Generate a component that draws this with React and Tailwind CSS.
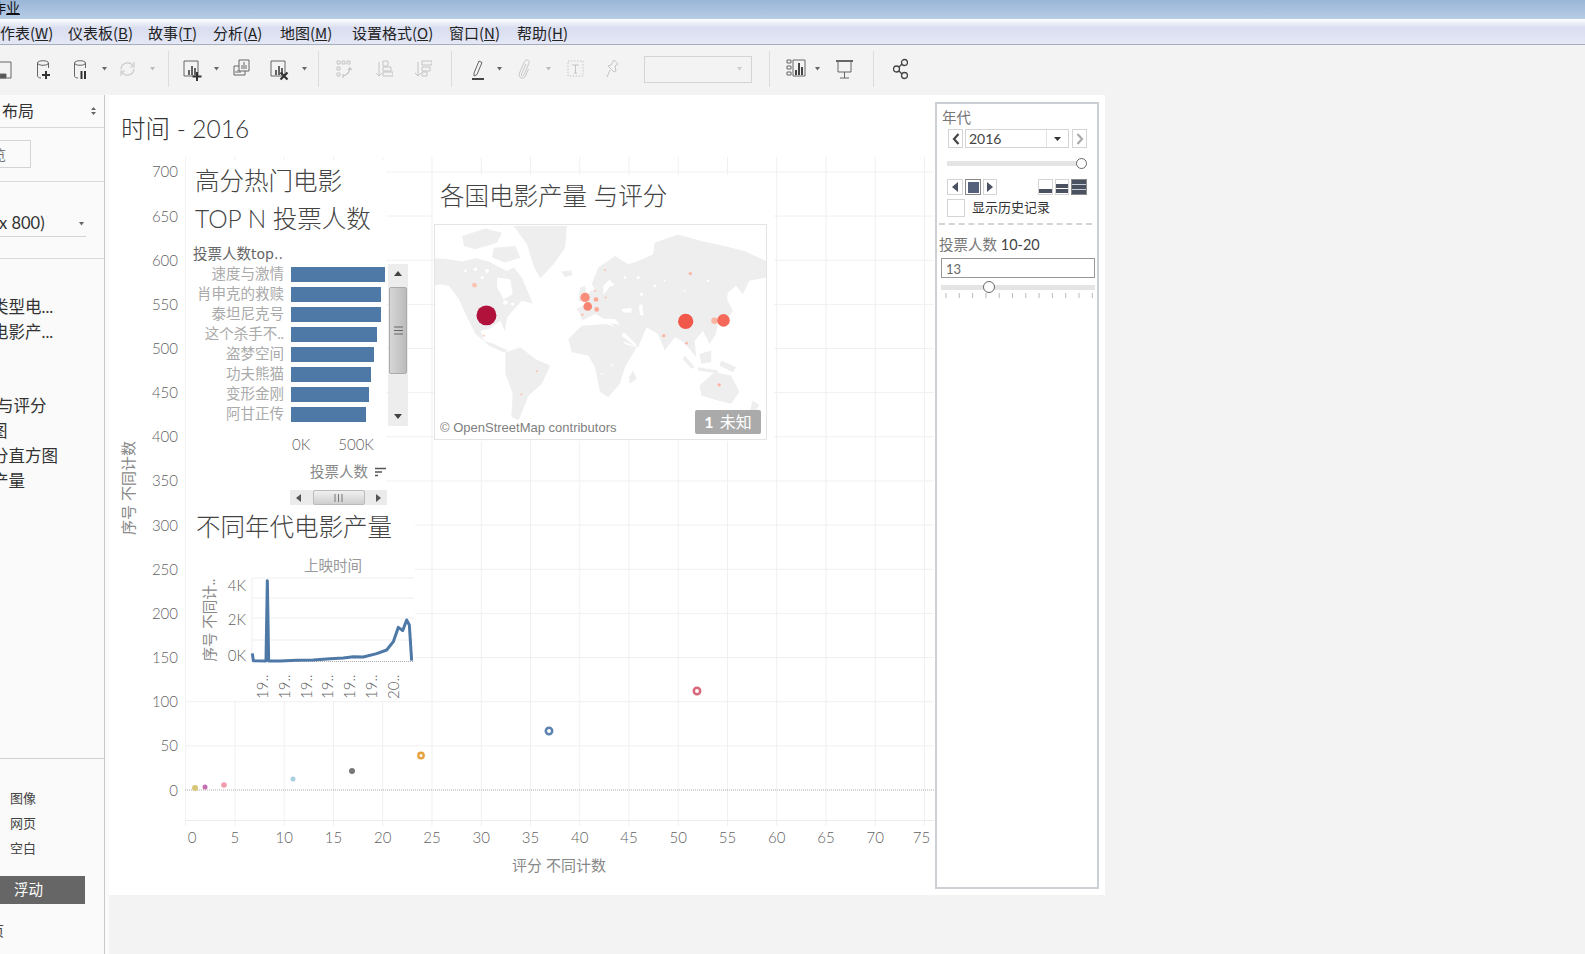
import React from "react";

const Dd = ({ ml, c = "#666" }) => (
  <svg width="5" height="4" viewBox="0 0 5 4" className={`shrink-0 ${ml}`}>
    <path d="M0 0h5L2.500 3.500z" fill={c} />
  </svg>
);
const Sep = ({ ml }) => <div className={`shrink-0 w-px h-[36px] bg-[#dcdcdc] ${ml}`} />;
const Ico = ({ w, h = 24, ml, children, stroke = "#666" }) => (
  <svg width={w} height={h} viewBox={`0 0 ${w} ${h}`} fill="none" stroke={stroke} strokeWidth="1" className={`shrink-0 ${ml}`}>
    {children}
  </svg>
);
const Db = () => (
  <>
    <path d="M1.500 6v13c0 1 1.500 2 3.500 2M12.500 6v5M1.500 6c0-3 11-3 11 0s-11 3-11 0z" />
  </>
);
const Chart = () => (
  <path d="M6 18v-5M9 18V9M12 18v-7" strokeWidth="1.800" stroke="#555" />
);

const Toolbar = () => (
  <div className="flex items-center h-[50px] pb-[2px] bg-[#f3f3f3] overflow-hidden">
    <Ico w={18} ml="-ml-[6px]">
      <path d="M1 5h16v16H1z" />
      <path d="M6 21v-4h6v4z" fill="#555" />
    </Ico>
    <Ico w={15} ml="ml-[24px]">
      <Db />
      <path d="M10 14v8M6 18h8" stroke="#333" strokeWidth="2" />
    </Ico>
    <Ico w={14} ml="ml-[22px]">
      <Db />
      <path d="M8.500 14v8M12 14v8" stroke="#333" strokeWidth="2" />
    </Ico>
    <Dd ml="ml-[15px]" />
    <Ico w={17} ml="ml-[12px]" stroke="#ccc">
      <path d="M2 12a6.500 6.500 0 0 1 12-3M15 12a6.500 6.500 0 0 1-12 3" strokeWidth="1.400" />
      <path d="M15 5v5h-4M2 19v-5h4" strokeWidth="1.200" />
    </Ico>
    <Dd ml="ml-[14px]" c="#bbb" />
    <Sep ml="ml-[13px]" />
    <Ico w={19} ml="ml-[14px]">
      <path d="M1 4h14v15H1z" />
      <Chart />
      <path d="M14 15v9M9.500 19.500h9" stroke="#333" strokeWidth="2" />
    </Ico>
    <Dd ml="ml-[12px]" />
    <Ico w={17} ml="ml-[14px]">
      <path d="M6 3h10v11H6z" />
      <path d="M1 9h5M1 9v9h11v-4" />
      <path d="M9 12V8M11 12V5M13 12V8M3 16v-2M5 16v-3M7 16v-2" />
    </Ico>
    <Ico w={19} ml="ml-[20px]">
      <path d="M1 4h14v15H1z" />
      <Chart />
      <path d="M10.500 15.500l7 7M17.500 15.500l-7 7" stroke="#333" strokeWidth="2.200" />
    </Ico>
    <Dd ml="ml-[13px]" />
    <Sep ml="ml-[11px]" />
    <Ico w={16} ml="ml-[17px]" stroke="#c4c4c4">
      <path d="M1 4h3v3H1zM6 4h3v3H6zM11 4h3v3h-3zM1 10h3v3H1zM1 16h3v3H1z" />
      <path d="M14 10c0 5-3 8-7 9M7 17v4M14 11l2 2M14 11l-2 2" strokeWidth="1.200" />
    </Ico>
    <Ico w={18} ml="ml-[23px]" stroke="#c4c4c4">
      <path d="M4 5v14M1 16l3 3 3-3" />
      <path d="M8 4h5v5H8zM8 10h8v4H8zM8 15h10v4H8z" />
    </Ico>
    <Ico w={18} ml="ml-[21px]" stroke="#c4c4c4">
      <path d="M4 5v14M1 16l3 3 3-3" />
      <path d="M8 4h10v4H8zM8 10h8v4H8zM8 15h5v4H8z" />
    </Ico>
    <Sep ml="ml-[19px]" />
    <Ico w={12} ml="ml-[20px]">
      <path d="M2 16L7 4l3 1.500-5 12-3 1.500z" />
      <path d="M0 22h12" stroke="#444" strokeWidth="2" />
    </Ico>
    <Dd ml="ml-[13px]" />
    <Ico w={12} ml="ml-[16px]" stroke="#c8c8c8">
      <path d="M8 7L3.500 17c-1 2 1.500 3 2.500 1l5-12c1-3-3-4.500-4.500-1.500L1.500 16c-2 5 4 7 6 3l3-7" strokeWidth="1" />
    </Ico>
    <Dd ml="ml-[16px]" c="#bbb" />
    <Ico w={17} ml="ml-[16px]" stroke="#c4c4c4">
      <path d="M1 4h15v15H1z" strokeDasharray="1.500 1.500" />
      <path d="M5 8h7M8.500 8v8M7 16h3" />
    </Ico>
    <Ico w={13} ml="ml-[22px]" stroke="#c4c4c4">
      <path d="M8 3l4 4-3 2 1 5-2 1-6-6 3-1zM4 13l-3 7" />
    </Ico>
    <div className="shrink-0 ml-[25px] w-[108px] h-[27px] border border-[#d4d4d4] flex items-center justify-end pr-[9px]">
      <Dd ml="" c="#ccc" />
    </div>
    <Sep ml="ml-[17px]" />
    <Ico w={20} ml="ml-[16px]">
      <path d="M1 3h4v3H1zM1 9h4v3H1zM1 15h4v3H1zM7 3h12v16H7z" />
      <path d="M10 18v-5M13 18V6M16 18v-8" stroke="#444" strokeWidth="2" />
    </Ico>
    <Dd ml="ml-[9px]" />
    <Ico w={17} ml="ml-[16px]">
      <path d="M0 4h17" strokeWidth="2" />
      <path d="M2 4v11h13V4M8.500 15v6M4 21h9" />
    </Ico>
    <Sep ml="ml-[20px]" />
    <Ico w={15} ml="ml-[19px]" stroke="#444">
      <circle cx="11.500" cy="5.500" r="3" strokeWidth="1.300" />
      <circle cx="3.500" cy="12" r="3" strokeWidth="1.300" />
      <circle cx="11.500" cy="18.500" r="3" strokeWidth="1.300" />
      <path d="M6 10l3-3M6 14l3 3" strokeWidth="1.300" />
    </Ico>
  </div>
);

const Menu = ({ t, k, w }) => (
  <span className={`shrink-0 ${w}`}>
    {t}(<span className="underline">{k}</span>)
  </span>
);

const Sidebar = () => (
  <div className="w-[105px] shrink-0 h-[859px] bg-[#fafafa] border-r border-[#c9c9c9] flex flex-col overflow-hidden text-[#333]">
    <div className="h-[33px] border-b border-[#d8d8d8] flex items-center justify-between pl-[2px] pr-[8px] text-[16px]">
      <span>布局</span>
      <svg width="5" height="8" viewBox="0 0 5 8"><path d="M0 3h5L2.500 0zM0 5h5L2.500 8z" fill="#666" /></svg>
    </div>
    <div className="h-[54px] border-b border-[#d8d8d8] pt-[12px]">
      <div className="w-[31px] h-[28px] border border-l-0 border-[#d4d4d4] bg-[#fafafa] overflow-hidden flex items-center text-[14px] text-[#777]">
        <span className="-ml-[8px]">览</span>
      </div>
    </div>
    <div className="h-[77px] border-b border-[#d8d8d8] pt-[31px]">
      <div className="w-[86px] h-[24px] border-b border-[#d4d4d4] flex items-center justify-between pr-[2px] pb-[2px] text-[16.500px] whitespace-nowrap">
        <span className="-ml-[1px]">x 800)</span>
        <Dd ml="" />
      </div>
    </div>
    <div className="h-[500px] border-b border-[#d0d0d0] pt-[36px] text-[16.500px] whitespace-nowrap">
      <div className="h-[25px] leading-[25px] -ml-[8px]">类型电...</div>
      <div className="h-[25px] leading-[25px] -ml-[8px]">电影产...</div>
      <div className="h-[25px] leading-[25px] -ml-[3px] mt-[49px]">与评分</div>
      <div className="h-[25px] leading-[25px] -ml-[9px]">图</div>
      <div className="h-[25px] leading-[25px] -ml-[8px]">分直方图</div>
      <div className="h-[25px] leading-[25px] -ml-[8px]">产量</div>
    </div>
    <div className="flex-1 pt-[27px] text-[13px] text-[#444]">
      <div className="h-[25px] leading-[25px] pl-[10px]">图像</div>
      <div className="h-[25px] leading-[25px] pl-[10px]">网页</div>
      <div className="h-[25px] leading-[25px] pl-[10px]">空白</div>
      <div className="mt-[15px] w-[85px] h-[28px] bg-[#666] text-white text-[14.500px] pl-[14px] leading-[28px]">浮动</div>
      <div className="mt-[14px] h-[25px] leading-[25px] -ml-[10px] text-[14px]">页</div>
    </div>
  </div>
);

const yv = [700, 650, 600, 550, 500, 450, 400, 350, 300, 250, 200, 150, 100, 50, 0];
const xv = Array.from({ length: 16 }, (_, i) => i * 5);
const Y = (v) => 790 - (v / 50) * 44.15;
const X = (v) => 185.7 + v * 9.85;

const Scatter = () => (
  <svg width="826" height="730" viewBox="109 155 826 730" className="block shrink-0">
    {yv.filter((v) => v > 0).map((v) => (
      <line key={v} x1="185" x2="934" y1={Y(v)} y2={Y(v)} stroke="#f0f0f0" />
    ))}
    {xv.map((v) => (
      <line key={v} x1={X(v)} x2={X(v)} y1="157" y2="826" stroke="#f0f0f0" />
    ))}
    <line x1="185" x2="934" y1="820.500" y2="820.500" stroke="#ececec" />
    <line x1="185" x2="934" y1="790" y2="790" stroke="#aaa" strokeDasharray="1 1" />
    {yv.map((v) => (
      <text key={v} x="178" y={Y(v) + 5.500} textAnchor="end" fontSize="15" fontWeight="300" fill="#5f5f5f">{v}</text>
    ))}
    {xv.map((v) => (
      <text key={v} x={v === 0 ? 192 : X(v) - (v === 75 ? 3 : 0)} y="843" textAnchor="middle" fontSize="15" fontWeight="300" fill="#5f5f5f">{v}</text>
    ))}
    <text x="559" y="871" textAnchor="middle" fontSize="15" fill="#888">评分 不同计数</text>
    <text transform="translate(134 488) rotate(-90)" textAnchor="middle" fontSize="15" fill="#888">序号 不同计数</text>
    <circle cx="195" cy="788" r="3" fill="#d9c576" />
    <circle cx="205" cy="787" r="2.500" fill="#c56fb0" />
    <circle cx="224" cy="785" r="2.800" fill="#ef9bb0" />
    <circle cx="293" cy="779" r="2.500" fill="#aacfe0" />
    <circle cx="352" cy="771" r="3" fill="#777" />
    <circle cx="421" cy="755.500" r="2.700" fill="#fff" stroke="#e8a13f" strokeWidth="2.400" />
    <circle cx="549" cy="731" r="3.200" fill="#fff" stroke="#5c83b0" strokeWidth="2.500" />
    <circle cx="697" cy="691" r="3.200" fill="#fff" stroke="#d8677c" strokeWidth="2.500" />
  </svg>
);

const bars = [
  ["速度与激情", 94],
  ["肖申克的救赎", 90],
  ["泰坦尼克号", 90],
  ["这个杀手不..", 86],
  ["盗梦空间", 83],
  ["功夫熊猫", 80],
  ["变形金刚", 78],
  ["阿甘正传", 75],
];

const TopPanel = () => (
  <div className="absolute left-[77px] top-[65px] w-[200px] h-[346px] bg-white pt-[2px]">
    <div className="h-[38px] leading-[38px] text-[24.500px] font-light text-[#444] pl-[9px]">高分热门电影</div>
    <div className="h-[38px] leading-[38px] text-[24.500px] font-light text-[#444] pl-[9px] whitespace-nowrap">TOP N 投票人数</div>
    <div className="mt-[7px] h-[18px] leading-[18px] text-[14.500px] text-[#666] pl-[7px] whitespace-nowrap">
      投票人数<span className="font-['DejaVu_Sans',sans-serif] text-[14px]">top..</span>
    </div>
    <div className="mt-[1px]">
      {bars.map(([n, w]) => (
        <div key={n} className="flex items-center h-[20px]">
          <div className="w-[98px] text-right text-[14.500px] text-[#aaa] whitespace-nowrap">{n}</div>
          <div className="ml-[7px] h-[15px] bg-[#4e79a7]" style={{ width: w }} />
        </div>
      ))}
    </div>
    <div className="mt-[10px] h-[20px] leading-[20px] pl-[106px] flex gap-[28px] text-[15px] font-light text-[#5f5f5f]">
      <span>0K</span>
      <span>500K</span>
    </div>
    <div className="mt-[9px] h-[18px] pl-[124px] flex items-center gap-[7px] text-[14.500px] text-[#888]">
      <span className="whitespace-nowrap">投票人数</span>
      <svg width="11" height="10" viewBox="0 0 11 10"><path d="M0 1.500h11M0 5h7M0 8.500h3" stroke="#555" strokeWidth="1.600" /></svg>
    </div>
    <div className="mt-[9px] ml-[104px] w-[97px] h-[15px] bg-[#ebebeb] flex items-center justify-between px-[6px]">
      <svg width="5" height="8" viewBox="0 0 5 8"><path d="M5 0v8L0 4z" fill="#555" /></svg>
      <div className="w-[52px] h-[15px] bg-gradient-to-b from-[#f0f0f0] to-[#cfcfcf] border border-[#bbb] rounded-[2px] flex items-center justify-center">
        <svg width="9" height="8" viewBox="0 0 9 8"><path d="M1 0v8M4.500 0v8M8 0v8" stroke="#777" /></svg>
      </div>
      <svg width="5" height="8" viewBox="0 0 5 8"><path d="M0 0v8l5-4z" fill="#555" /></svg>
    </div>
    <div className="absolute left-[202px] top-[104px] w-[20px] h-[162px] bg-[#ededed] flex flex-col items-center justify-between py-[7px]">
      <svg width="8" height="5" viewBox="0 0 8 5"><path d="M0 5h8L4 0z" fill="#444" /></svg>
      <div className="absolute left-[1px] top-[23px] w-[18px] h-[87px] rounded-[2px] bg-gradient-to-r from-[#d6d6d6] to-[#bcbcbc] border border-[#aaa] flex items-center justify-center">
        <svg width="9" height="9" viewBox="0 0 9 9"><path d="M0 1h9M0 4.500h9M0 8h9" stroke="#666" /></svg>
      </div>
      <svg width="8" height="5" viewBox="0 0 8 5"><path d="M0 0h8L4 5z" fill="#444" /></svg>
    </div>
  </div>
);

const line = "217,430 220,452 258,453 262,212 266,453 300,453 350,451 400,450 450,446 490,444 520,440 550,441 590,431 620,420 640,395 655,352 668,362 680,330 688,345 695,452";

const YearPanel = () => (
  <div className="absolute left-[77px] top-[411px] w-[229px] h-[195px] bg-white pt-[2px]">
    <div className="h-[38px] leading-[38px] text-[24.500px] font-light text-[#444] pl-[10px] whitespace-nowrap">不同年代电影产量</div>
    <svg width="229" height="155" viewBox="186 546 229 155" className="block">
      <text x="333" y="571" textAnchor="middle" fontSize="14.500" fill="#999">上映时间</text>
      <text transform="translate(215 620) rotate(-90)" textAnchor="middle" fontSize="14.500" fill="#888">序号 不同计..</text>
      {[578, 598, 618, 640].map((y) => (
        <line key={y} x1="252" x2="414" y1={y} y2={y} stroke="#efefef" />
      ))}
      <line x1="252" x2="252" y1="578" y2="662" stroke="#efefef" />
      <line x1="252" x2="414" y1="661.500" y2="661.500" stroke="#aaa" strokeDasharray="1 1" />
      <text x="246" y="591" textAnchor="end" fontSize="15" fontWeight="300" fill="#5f5f5f">4K</text>
      <text x="246" y="625" textAnchor="end" fontSize="15" fontWeight="300" fill="#5f5f5f">2K</text>
      <text x="246" y="661" textAnchor="end" fontSize="15" fontWeight="300" fill="#5f5f5f">0K</text>
      <g transform="translate(180 510) scale(.33333)">
        <polyline points={line} fill="none" stroke="#4e79a7" strokeWidth="9" strokeLinejoin="round" />
      </g>
      {[268, 290, 312, 333, 355, 377, 399].map((x, i) => (
        <text key={x} transform={`translate(${x} 699) rotate(-90)`} fontSize="15" fontWeight="300" fill="#5f5f5f">{i === 6 ? "20.." : "19.."}</text>
      ))}
    </svg>
  </div>
);

const bubbles = [
  [183, 434, 30, "#b0123c"], [783, 452, 23, "#f1584a"], [870, 450, 10, "#fab5a2"], [897, 449, 19, "#f4695a"],
  [480, 380, 14, "#f98e7a"], [488, 407, 13, "#f68470"], [513, 386, 7, "#fba795"], [515, 416, 7, "#fba795"],
  [472, 432, 4, "#fbc3b3"], [147, 343, 7, "#fbc3b3"], [797, 308, 5, "#fbb5a5"], [540, 297, 3, "#fbc3b3"],
  [717, 495, 5, "#fbb5a5"], [786, 518, 4, "#fbb5a5"], [884, 643, 5, "#fbb5a5"], [335, 602, 3, "#fbc3b3"],
  [288, 672, 3, "#fbc3b3"], [175, 495, 3, "#fbc3b3"], [510, 360, 3, "#fbc3b3"], [542, 380, 3, "#fbc3b3"],
];

const lakes = [
  [185, 300, 6], [150, 295, 5], [240, 395, 7], [262, 400, 5], [120, 300, 4], [170, 320, 5], [650, 370, 5], [690, 345, 4],
  [640, 320, 5], [720, 330, 3], [780, 360, 3], [850, 330, 4], [560, 340, 6], [600, 320, 4], [560, 585, 3], [530, 610, 3],
];

const MapPanel = () => (
  <div className="absolute left-[325px] top-[80px] w-[340px] h-[266px] bg-white">
    <div className="h-[42px] leading-[42px] text-[24.500px] font-light text-[#444] pl-[6px] whitespace-nowrap">各国电影产量 与评分</div>
    <div className="relative mt-[7px] w-[333px] h-[216px] border border-[#e4e4e4] bg-white overflow-hidden">
      <svg width="331" height="214" viewBox="28 162 997 644" className="block">
        <g fill="#eeeeee">
          <path d="M28 262L70 265L110 272L150 262L190 272L215 285L245 300L265 290L290 320L322 398L290 390L262 420L245 440L238 482L225 450L190 475L165 480L175 510L205 520L248 540L235 546L190 525L150 490L125 440L100 385L70 345L45 340L28 345Z" />
          <path d="M110 195L180 172L230 185L215 215L150 235L115 225Z" />
          <path d="M205 230L270 225L285 260L240 275L200 260Z" />
          <path d="M265 165L425 165L420 230L385 280L345 322L325 285L305 220Z" />
          <path d="M408 302L438 298L442 312L420 318Z" />
          <path d="M465 350L480 345L488 385L460 392Z" />
          <path d="M500 340L520 290L570 255L610 280L640 270L685 250L690 215L760 190L830 210L900 225L960 240L1025 270L1025 320L975 330L955 370L935 345L910 365L905 410L880 450L875 490L855 520L835 480L810 510L815 560L790 530L770 510L750 500L720 540L700 490L665 470L640 530L590 510L565 465L545 450L530 440L510 430L470 450L465 430L455 415L490 395L480 370L510 355Z" />
          <path d="M430 505L470 465L545 460L570 470L600 520L635 530L600 590L585 640L550 680L525 665L510 590L490 555L440 545Z" />
          <path d="M240 545L285 530L330 565L375 585L350 640L310 675L280 750L258 740L262 670L240 610Z" />
          <path d="M825 645L870 605L920 615L945 665L920 700L880 690L830 675Z" />
          <path d="M905 380L925 420L895 465L885 455Z" />
          <path d="M625 600L635 625L615 640L612 620Z" />
          <path d="M780 555L810 590L800 595L775 565ZM820 590L880 600L880 608L820 600ZM825 550L860 540L860 575L830 580ZM890 570L935 590L925 605L885 585Z" />
          <path d="M985 690L1005 705L990 725L975 730Z" />
        </g>
        <g fill="#fff">
          <path d="M215 320L255 325L262 370L235 385L215 350Z" />
          <path d="M535 345L555 325L560 340L545 360L535 372Z" />
          <path d="M505 443L570 445L585 462L555 458L520 452Z" />
          <path d="M590 415L620 412L620 425L595 425Z" />
          <path d="M642 405L652 400L656 435L645 432Z" />
          <path d="M597 485L635 522L630 526L590 495Z" />
          <path d="M665 482L688 482L680 495Z" />
          {lakes.map(([x, y, r], i) => (
            <circle key={i} cx={x} cy={y} r={r} />
          ))}
        </g>
        {bubbles.map(([x, y, r, c], i) => (
          <circle key={i} cx={x} cy={y} r={r} fill={c} />
        ))}
      </svg>
      <div className="absolute left-[5px] bottom-[2px] text-[13px] leading-[18px] text-[#808080] font-['Liberation_Sans',sans-serif] whitespace-nowrap">© OpenStreetMap contributors</div>
      <div className="absolute right-[5px] bottom-[5px] w-[66px] h-[24px] bg-[#aaa] rounded-[2px] flex items-center justify-center gap-[6px] text-white text-[16px] font-bold whitespace-nowrap">
        <span>1</span><span className="font-normal">未知</span>
      </div>
    </div>
  </div>
);

const Btn = ({ className = "", children }) => (
  <div className={`border border-[#d4d4d4] bg-white flex items-center justify-center shrink-0 ${className}`}>{children}</div>
);

const Controls = () => (
  <div className="mt-[7px] w-[164px] h-[787px] border-2 border-[#ccd0d4] bg-white shrink-0">
    <div className="mt-[4px] h-[20px] leading-[20px] pl-[5px] text-[14.500px] text-[#777]">年代</div>
    <div className="mt-[1px] pl-[11px] flex h-[19px]">
      <Btn className="w-[15px] h-[19px]">
        <svg width="8" height="12" viewBox="0 0 8 12"><path d="M6.500 1L2 6l4.500 5" fill="none" stroke="#444" strokeWidth="2.200" /></svg>
      </Btn>
      <Btn className="ml-[2px] w-[104px] h-[19px] !justify-start pl-[3px] text-[14px] text-[#444]">
        <span>2016</span>
        <div className="ml-auto w-[22px] h-full border-l border-[#e4e4e4] flex items-center justify-center">
          <svg width="7" height="4" viewBox="0 0 7 4"><path d="M0 0h7L3.500 4z" fill="#333" /></svg>
        </div>
      </Btn>
      <Btn className="ml-[3px] w-[15px] h-[19px]">
        <svg width="8" height="12" viewBox="0 0 8 12"><path d="M1.500 1L6 6l-4.500 5" fill="none" stroke="#aaa" strokeWidth="2.200" /></svg>
      </Btn>
    </div>
    <div className="relative mt-[10px] ml-[10px] w-[134px] h-[11px] flex items-center">
      <div className="w-full h-[5px] bg-[#e4e4e4]" />
      <div className="absolute -right-[6px] top-0 w-[11px] h-[11px] rounded-full bg-white border border-[#666]" />
    </div>
    <div className="mt-[10px] ml-[10px] w-[140px] h-[16px] flex">
      <Btn className="w-[16px] h-[16px]"><svg width="6" height="10" viewBox="0 0 6 10"><path d="M6 0v10L0 5z" fill="#4a5160" /></svg></Btn>
      <Btn className="ml-[2px] w-[16px] h-[16px] !border-[#888]"><div className="w-[11px] h-[11px] bg-[#55607a]" /></Btn>
      <Btn className="ml-[2px] w-[14px] h-[16px]"><svg width="6" height="10" viewBox="0 0 6 10"><path d="M0 0v10l6-5z" fill="#4a5160" /></svg></Btn>
      <Btn className="ml-auto w-[15px] h-[16px] !items-end"><div className="w-[13px] h-[4px] mb-px bg-[#4a5160]" /></Btn>
      <Btn className="ml-[2px] w-[14px] h-[16px] !items-end"><div className="w-[12px] h-[9px] mb-px bg-[linear-gradient(#4a5160_40%,#fff_40%,#fff_55%,#4a5160_55%)]" /></Btn>
      <Btn className="ml-[2px] w-[16px] h-[16px] !border-[#888]"><div className="w-[14px] h-[14px] bg-[linear-gradient(#4a5160_28%,#c8ccd4_28%,#c8ccd4_36%,#4a5160_36%,#4a5160_64%,#c8ccd4_64%,#c8ccd4_72%,#4a5160_72%)]" /></Btn>
    </div>
    <div className="mt-[4px] ml-[10px] flex items-center h-[18px]">
      <div className="w-[18px] h-[18px] border border-[#d4d4d4] bg-white" />
      <span className="ml-[7px] text-[13px] text-[#333] whitespace-nowrap">显示历史记录</span>
    </div>
    <div className="mt-[6px] ml-[2px] w-[153px] border-t-2 border-dashed border-[#d4d4d4]" />
    <div className="mt-[10px] h-[20px] leading-[20px] pl-[2px] text-[14.500px] text-[#777] whitespace-nowrap">
      投票人数 <span className="text-[#444]">10-20</span>
    </div>
    <div className="mt-[3px] ml-[4px] w-[154px] h-[20px] border border-[#999] bg-white pl-[4px] pt-[1px] leading-[18px] text-[13px] text-[#666]">13</div>
    <div className="relative mt-[4px] ml-[4px] w-[154px] h-[10px] flex items-center">
      <div className="w-full h-[5px] bg-[#e4e4e4]" />
      <div className="absolute left-[42px] -top-px w-[12px] h-[12px] rounded-full bg-white border border-[#666]" />
    </div>
    <svg width="154" height="6" viewBox="0 0 154 6" className="block ml-[4px] mt-[1px]">
      {Array.from({ length: 12 }, (_, i) => (
        <line key={i} x1={5 + i * 13.300} x2={5 + i * 13.300} y1="0" y2="5" stroke="#bbb" />
      ))}
    </svg>
  </div>
);

export default function App() {
  return (
    <div className="w-[1585px] h-[954px] overflow-hidden bg-[#f3f3f3] font-['Lato','Noto_Sans_CJK_SC',sans-serif]">
      <div className="h-[19px] bg-gradient-to-b from-[#9ab6d6] to-[#b7cce6] overflow-hidden text-[14px] leading-[15px] text-[#111] whitespace-nowrap">
        <span className="-ml-[8px] inline-block">作<span className="underline">业</span></span>
      </div>
      <div className="h-[26px] border-b border-[#a9aebc] bg-[linear-gradient(#ffffff,#d9def0_35%,#e4e7f5)] pt-[4px] flex -ml-[15px] text-[15px] leading-[19px] text-[#222] font-['Noto_Sans_CJK_SC','Liberation_Sans',sans-serif] whitespace-nowrap">
        <Menu t="工作表" k="W" w="w-[83px]" />
        <Menu t="仪表板" k="B" w="w-[80px]" />
        <Menu t="故事" k="T" w="w-[65px]" />
        <Menu t="分析" k="A" w="w-[67px]" />
        <Menu t="地图" k="M" w="w-[72px]" />
        <Menu t="设置格式" k="O" w="w-[97px]" />
        <Menu t="窗口" k="N" w="w-[68px]" />
        <Menu t="帮助" k="H" w="w-[60px]" />
      </div>
      <Toolbar />
      <div className="flex">
        <Sidebar />
        <div className="w-[4px] h-[859px] bg-[#fbfbfb] shrink-0" />
        <div className="relative w-[996px] h-[800px] bg-white flex">
          <div className="w-[826px] shrink-0 flex flex-col">
            <div className="h-[60px] pt-[16px] pl-[12px] text-[24.500px] font-light leading-[36px] text-[#333]">时间 - 2016</div>
            <Scatter />
          </div>
          <Controls />
          <TopPanel />
          <YearPanel />
          <MapPanel />
        </div>
      </div>
    </div>
  );
}
